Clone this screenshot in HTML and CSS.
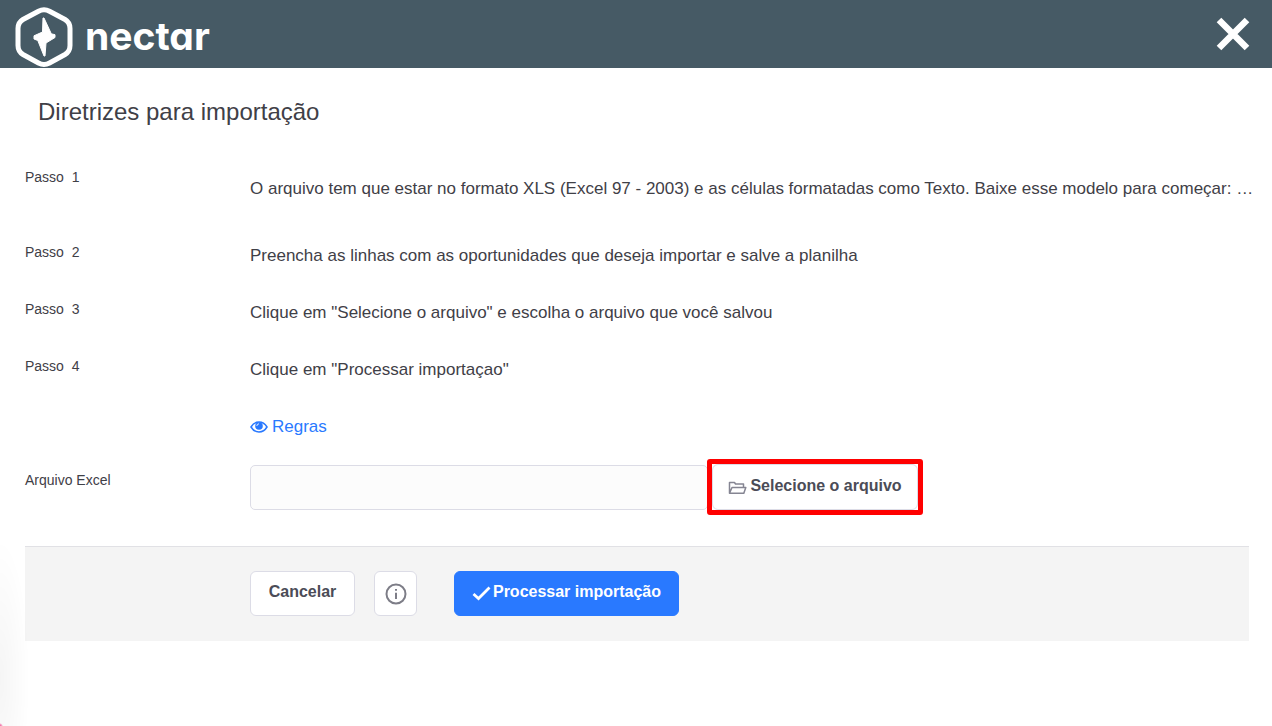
FILE: index.html
```html
<!DOCTYPE html>
<html lang="pt-BR">
<head>
<meta charset="utf-8">
<meta name="viewport" content="width=device-width, initial-scale=1">
<title>Diretrizes para importação</title>
<link rel="stylesheet" href="styles.css">
</head>
<body>
<header class="topbar">
  <a class="brand" href="#" aria-label="nectar">
    <svg class="brand-mark" viewBox="0 0 60 62" aria-hidden="true">
      <path d="M24.500 5.200Q30 2.200 35.500 5.200L51 13.500Q56 16.500 56 22.500V39.500Q56 45.500 51 48.500L35.500 57Q30 60 24.500 57L9 48.500Q4 45.500 4 39.500V22.500Q4 16.500 9 13.500Z" fill="none" stroke="#fff" stroke-width="5"/>
      <path d="M30 12L37.300 27.800L41 28.700V31.500L32 37L31 50H30L23.800 34.500L20 33V29.800L28.500 26L29 12Z" fill="#fff" stroke="#fff" stroke-width="1" stroke-linejoin="round"/>
    </svg>
    <span class="brand-name">nectar</span>
  </a>
  <button class="close" type="button" aria-label="Fechar">
    <svg viewBox="0 0 34 34" aria-hidden="true"><path d="M3 3L31 31M31 3L3 31" stroke="#fff" stroke-width="6.500"/></svg>
  </button>
</header>
<main class="page">
  <h1 class="title">Diretrizes para importação</h1>
  <form class="form">
    <dl class="steps">
      <div class="step step-first"><dt>Passo&nbsp; 1</dt><dd>O arquivo tem que estar no formato XLS (Excel 97 - 2003) e as células formatadas como Texto. Baixe esse modelo para começar: …</dd></div>
      <div class="step"><dt>Passo&nbsp; 2</dt><dd>Preencha as linhas com as oportunidades que deseja importar e salve a planilha</dd></div>
      <div class="step"><dt>Passo&nbsp; 3</dt><dd>Clique em "Selecione o arquivo" e escolha o arquivo que você salvou</dd></div>
      <div class="step"><dt>Passo&nbsp; 4</dt><dd>Clique em "Processar importaçao"</dd></div>
    </dl>
    <a class="rules" href="#">
      <svg class="eye" viewBox="0 0 18 12" aria-hidden="true"><path d="M1 6Q4 1 9 1T17 6Q14 11 9 11T1 6Z" fill="none" stroke="currentColor" stroke-width="1.500"/><circle cx="9" cy="5" r="3.800" fill="currentColor"/><path d="M6.800 5Q6.900 2.900 9 2.800" fill="none" stroke="#fff" stroke-width="0.900"/></svg>
      <span>Regras</span>
    </a>
    <div class="file-row">
      <label for="excel">Arquivo Excel</label>
      <div class="file-group">
        <input class="file-name" id="excel" type="text" readonly>
        <div class="highlight">
          <button class="btn btn-file" type="button">
            <svg class="folder" viewBox="0 0 19 14" aria-hidden="true"><path d="M1.500 12.300V1.500H6.500L7.500 3H15.500V6.500M1.500 12.300L4 6.500H17.800L15.800 12.300Z" fill="none" stroke="currentColor" stroke-width="1.500" stroke-linejoin="round"/></svg>
            <span>Selecione o arquivo</span>
          </button>
        </div>
      </div>
    </div>
    <div class="actions">
      <button class="btn btn-cancel" type="button">Cancelar</button>
      <button class="btn btn-info" type="button" aria-label="Informações">
        <svg viewBox="0 0 22 22" aria-hidden="true"><circle cx="11" cy="11" r="9.500" fill="none" stroke="currentColor" stroke-width="2"/><path d="M11 9.700V16M11 6V7.800" stroke="currentColor" stroke-width="2"/></svg>
      </button>
      <button class="btn btn-primary" type="submit">
        <svg class="check" viewBox="0 0 19 15" aria-hidden="true"><path d="M1.500 8L6.500 12.500L17.500 1.500" fill="none" stroke="currentColor" stroke-width="2.800"/></svg>
        <span>Processar importação</span>
      </button>
    </div>
  </form>
</main>
<div class="corner-glow" aria-hidden="true"></div>
</body>
</html>
```
FILE: styles.css
```css
* { box-sizing: border-box; }
body {
  margin: 0;
  min-height: 100vh;
  background: #fff;
  color: #3f4047;
  font-family: "Liberation Sans", Arial, sans-serif;
  font-size: 17px;
  overflow-x: hidden;
}
.topbar {
  display: flex;
  align-items: center;
  justify-content: space-between;
  height: 68px;
  padding: 0 22px 0 14px;
  background: #465a65;
}
.brand {
  display: flex;
  align-items: center;
  gap: 11px;
  padding-top: 6px;
  color: #fff;
  text-decoration: none;
}
.brand-mark { width: 60px; height: 62px; }
.brand-name {
  padding-bottom: 2px;
  font: 700 39px/44px Inter, sans-serif;
  font-feature-settings: "cv11";
}
.close {
  padding: 0;
  border: 0;
  background: none;
  cursor: pointer;
}
.close svg { display: block; width: 34px; height: 34px; }
.page { padding: 28px 23px 0 25px; }
.title {
  margin: 0 0 40px 13px;
  font-size: 24px;
  line-height: 32px;
  font-weight: 400;
}
.steps { margin: 0; }
.step {
  display: grid;
  grid-template-columns: 225px minmax(0, 1fr);
  height: 57px;
}
.step-first { height: 68px; }
.step dt, .file-row label { font-size: 14px; line-height: 18px; }
.step dt { padding-top: 7px; }
.step dd {
  margin: 0 -16px 0 0;
  padding-top: 8px;
  line-height: 24px;
  white-space: nowrap;
  overflow: hidden;
  text-overflow: ellipsis;
}
.step-first dt { padding-top: 0; }
.step-first dd { padding-top: 9px; }
.rules {
  display: inline-flex;
  align-items: center;
  gap: 4px;
  margin: 8px 0 26px 225px;
  line-height: 24px;
  color: #2979ff;
  text-decoration: none;
}
.eye { width: 18px; height: 12px; }
.file-row {
  display: grid;
  grid-template-columns: 225px minmax(0, 1fr);
  margin-bottom: 36px;
}
.file-row label { padding-top: 6px; }
.file-group { display: flex; }
.file-name {
  width: 458px;
  height: 45px;
  border: 1px solid #dcdce6;
  border-radius: 5px;
  background: #fcfcfc;
  font: inherit;
}
.highlight {
  margin: -6px 0 -5px -1px;
  border: 5px solid #f00;
  border-radius: 3px;
  background: #fff;
}
.btn {
  display: flex;
  align-items: center;
  justify-content: center;
  height: 45px;
  border: 1px solid #dcdce6;
  border-radius: 6px;
  background: #fff;
  color: #4b4c57;
  font: 700 16px/20px "Liberation Sans", Arial, sans-serif;
  cursor: pointer;
}
.btn-file { gap: 3px; width: 206px; height: 46px; padding: 0 0 3px; }
.folder { width: 19px; height: 14px; margin-top: 4px; color: #858592; }
.actions {
  display: flex;
  align-items: flex-start;
  padding: 24px 0 25px 225px;
  border-top: 1px solid #e1e1e5;
  background: #f4f4f4;
}
.btn-cancel { width: 105px; padding: 0 0 4px; margin-right: 19px; }
.btn-info { width: 43px; padding: 0; margin-right: 37px; color: #7d7d87; }
.btn-info svg { width: 22px; height: 22px; }
.btn-primary {
  gap: 2px;
  width: 225px;
  padding: 0 0 4px;
  border-color: #2979ff;
  background: #2979ff;
  color: #fff;
}
.check { width: 19px; height: 15px; margin-top: 3px; }
.corner-glow {
  position: fixed;
  left: 0;
  bottom: 0;
  width: 30px;
  height: 190px;
  background:
    radial-gradient(circle at 0 100%, #f279ad 0 1px, transparent 3px),
    radial-gradient(ellipse at 0 75%, rgba(0, 0, 0, 0.04), transparent 70%);
  pointer-events: none;
}
```
